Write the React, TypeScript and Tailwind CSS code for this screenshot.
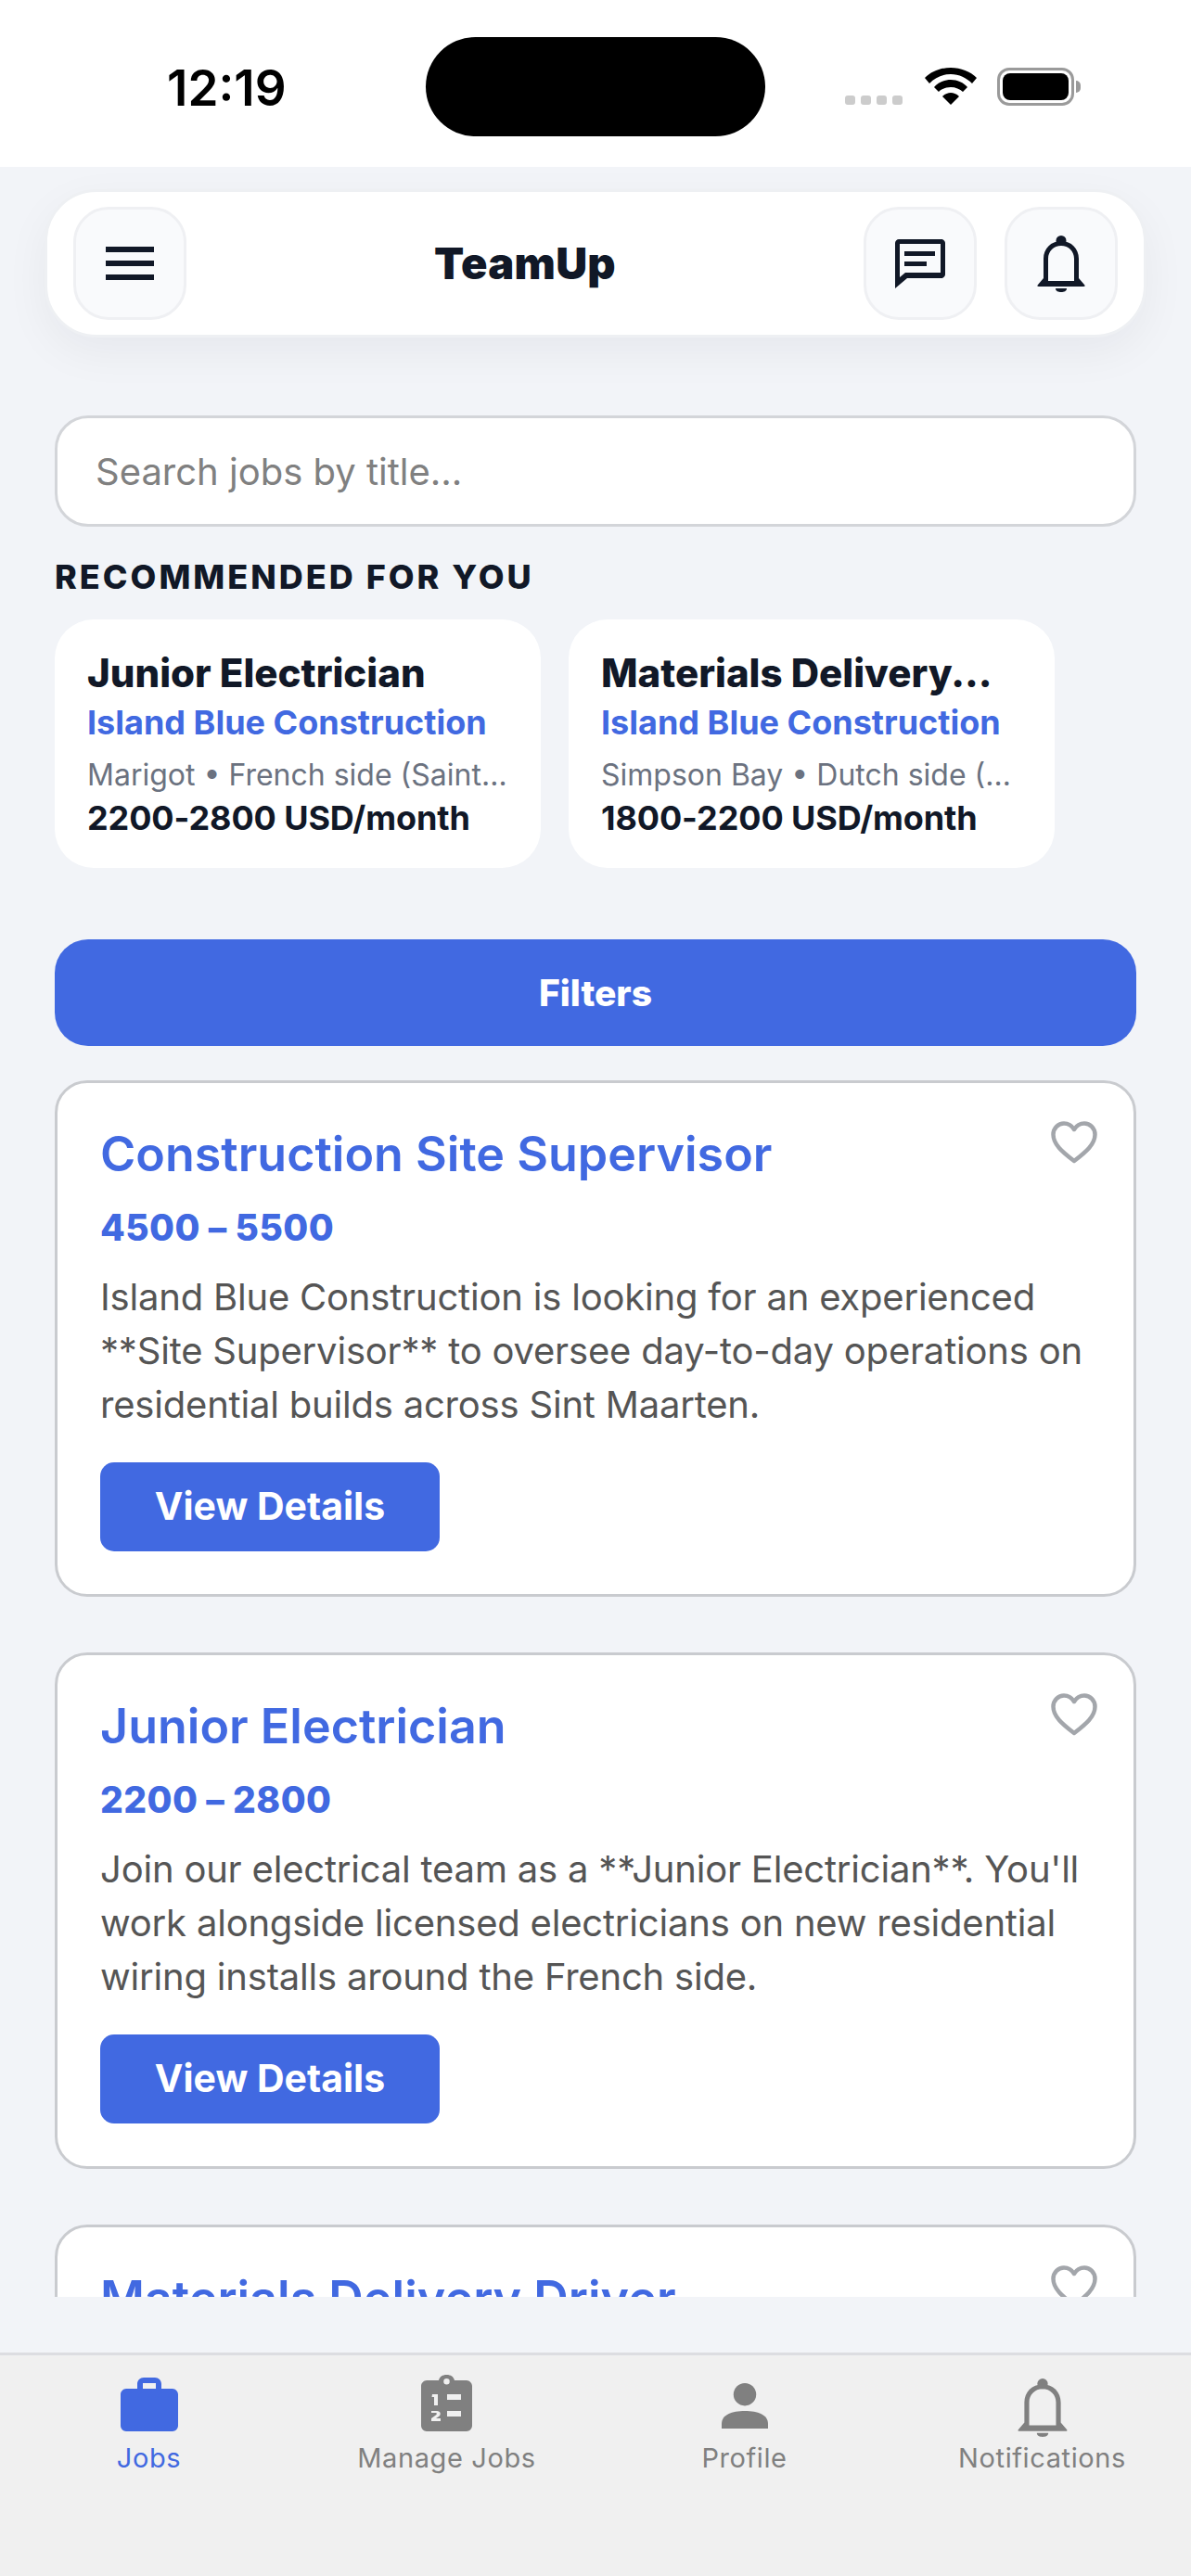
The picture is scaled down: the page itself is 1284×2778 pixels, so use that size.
const RECOMMENDED = [
  {
    title: "Junior Electrician",
    company: "Island Blue Construction",
    location: "Marigot • French side (Saint Martin)",
    pay: "2200-2800 USD/month",
  },
  {
    title: "Materials Delivery...",
    company: "Island Blue Construction",
    location: "Simpson Bay • Dutch side (Sint Maarten)",
    pay: "1800-2200 USD/month",
  },
];

type Job = { title: string; pay?: string; lines?: string[] };

// the last card is only ever seen cut off by the list, so it carries just a title
const JOBS: Job[] = [
  {
    title: "Construction Site Supervisor",
    pay: "4500 – 5500",
    lines: [
      "Island Blue Construction is looking for an experienced",
      "**Site Supervisor** to oversee day-to-day operations on",
      "residential builds across Sint Maarten.",
    ],
  },
  {
    title: "Junior Electrician",
    pay: "2200 – 2800",
    lines: [
      "Join our electrical team as a **Junior Electrician**. You'll",
      "work alongside licensed electricians on new residential",
      "wiring installs around the French side.",
    ],
  },
  { title: "Materials Delivery Driver" },
];

const BellIcon = ({ className }: { className: string }) => (
  <svg viewBox="0 0 52 61" className={className} fill="currentColor">
    <circle cx="26" cy="5.5" r="5.5" />
    <path
      fillRule="evenodd"
      d="M26 6C15 6 7 14 7 25v21l-6 7c-1 1-1 2 1 2h48c2 0 2-1 1-2l-6-7V25C45 14 37 6 26 6Zm0 5c8 0 14 6 14 14v24H12V25c0-8 6-14 14-14Z"
    />
    <path d="M20 57h12c0 3-3 4-6 4s-6-1-6-4Z" />
  </svg>
);

const ChatIcon = () => (
  <svg viewBox="0 0 54 53" className="h-[53px] w-[54px]" fill="currentColor">
    <path
      fillRule="evenodd"
      d="M4 0h46c2 0 4 2 4 4v34c0 2-2 4-4 4H13L0 53V4c0-2 2-4 4-4Zm1 5v36l6-5h38V5H5Z"
    />
    <rect x="10" y="13" width="33" height="5" />
    <rect x="10" y="24" width="24" height="5" />
  </svg>
);

const HeartIcon = () => (
  <svg viewBox="0 0 50 46" className="h-[46px] w-[50px]" fill="none" stroke="#a3a6ab" strokeWidth="4.5" strokeLinejoin="round">
    <path d="M25 43C12 33 2.500 25 2.500 14.500 2.500 7.500 8 2.500 14 2.500c4.500 0 8.500 2.500 11 6.500 2.500-4 6.500-6.500 11-6.500 6 0 11.500 5 11.500 12C47.500 25 38 33 25 43Z" />
  </svg>
);

const BriefcaseIcon = () => (
  <svg viewBox="0 0 62 58" className="h-[58px] w-[62px]" fill="currentColor">
    <path
      fillRule="evenodd"
      d="M6 12h12V7c0-4 3-7 7-7h12c4 0 7 3 7 7v5h12c3 0 6 3 6 6v34c0 3-3 6-6 6H6c-3 0-6-3-6-6V18c0-3 3-6 6-6Zm18-6v6h14V6H24Z"
    />
  </svg>
);

const ClipboardIcon = () => (
  <svg viewBox="0 0 55 61" className="h-[61px] w-[55px]" fill="currentColor">
    <path
      fillRule="evenodd"
      d="M6 6h13c1-4 4-6 8.500-6S35 2 36 6h13c3 0 6 3 6 6v43c0 3-3 6-6 6H6c-3 0-6-3-6-6V12c0-3 3-6 6-6Zm21.500-2a3 3 0 1 0 0 6.500 3 3 0 0 0 0-6.500ZM28 21h15v6H28v-6Zm0 18h15v6H28v-6ZM14 21h-2l-.500 3H14v9h4V21h-4Zm-3 18v2h5c1 0 1 1 .500 2l-5.500 4v3h10v-3h-5l3-2c3-2 2-6-2-6h-6Z"
    />
  </svg>
);

const PersonIcon = () => (
  <svg viewBox="0 0 50 49" className="h-[49px] w-[50px]" fill="currentColor">
    <circle cx="25" cy="12.200" r="12.200" />
    <path d="M0 44c0-10 11-14 25-14s25 4 25 14v5H0v-5Z" />
  </svg>
);

const StatusBar = () => (
  <div className="relative h-[180px] shrink-0 bg-white">
    <span className="absolute left-[180px] top-[63px] text-[53px] leading-[64px] font-semibold text-black">
      12:19
    </span>
    <div className="absolute left-[459px] top-[40px] h-[107px] w-[366px] rounded-full bg-black" />
    <div className="absolute left-[911px] top-[103px] flex gap-[6px]">
      <span className="h-[10px] w-[11px] rounded-[3px] bg-[#cccccc]" />
      <span className="h-[10px] w-[11px] rounded-[3px] bg-[#cccccc]" />
      <span className="h-[10px] w-[11px] rounded-[3px] bg-[#cccccc]" />
      <span className="h-[10px] w-[11px] rounded-[3px] bg-[#cccccc]" />
    </div>
    <svg viewBox="0 0 56 40" className="absolute left-[997px] top-[73px] h-[40px] w-[56px]" fill="currentColor">
      <path d="M28 0c11 0 21 4 28 11l-5 6C45 11 37 7 28 7S11 11 5 17l-5-6C7 4 17 0 28 0Z" />
      <path d="M28 13c7 0 14 3 18 8l-5 5c-3-3-8-5-13-5s-10 2-13 5l-5-5c4-5 11-8 18-8Z" />
      <path d="M28 27c3 0 6 1 9 4l-9 9-9-9c3-3 6-4 9-4Z" />
    </svg>
    <div className="absolute left-[1075px] top-[73px] h-[41px] w-[83px] rounded-[13px] border-[3px] border-[#9a9a9a] p-[3px]">
      <div className="h-full w-full rounded-[8px] bg-black" />
    </div>
    <div className="absolute left-[1160px] top-[87px] h-[13px] w-[5px] rounded-r-full bg-[#9a9a9a]" />
  </div>
);

const IconButton = ({ children }: { children: React.ReactNode }) => (
  <button className="flex h-[122px] w-[122px] items-center justify-center rounded-[38px] border-[3px] border-[#eff0f3] bg-[#f9fafc] text-[#111827]">
    {children}
  </button>
);

const Header = () => (
  <div className="relative z-10 mx-[48px] mt-[24px] flex h-[160px] items-center rounded-[56px] border-[3px] border-[#eef0f3] bg-white px-[28px] shadow-[0_16px_48px_rgba(17,24,39,0.05)]">
    <IconButton>
      <span className="flex w-[52px] flex-col gap-[8.500px]">
        <span className="h-[6.500px] bg-[#111827]" />
        <span className="h-[6.500px] bg-[#111827]" />
        <span className="h-[6.500px] bg-[#111827]" />
      </span>
    </IconButton>
    <h1 className="flex-1 text-center text-[47px] leading-[56px] font-black tracking-[0.300px] text-[#111827]">
      TeamUp
    </h1>
    <div className="flex gap-[30px]">
      <IconButton>
        <ChatIcon />
      </IconButton>
      <IconButton>
        <BellIcon className="h-[61px] w-[52px]" />
      </IconButton>
    </div>
  </div>
);

const RecommendedCard = ({ job }: { job: (typeof RECOMMENDED)[number] }) => (
  <div className="h-[268px] w-[524px] shrink-0 rounded-[42px] bg-white px-[35px] pt-[30px]">
    <p className="truncate text-[42px] leading-[56px] font-extrabold text-[#111827]">{job.title}</p>
    <p className="mt-[3px] truncate text-[36px] leading-[44px] font-bold text-[#4169e1]">{job.company}</p>
    <p className="mt-[13px] truncate text-[32px] leading-[44px] text-[#6b7280]">{job.location}</p>
    <p className="truncate text-[36px] leading-[48px] font-bold tracking-[-0.100px] text-[#111827]">{job.pay}</p>
  </div>
);

const JobCard = ({ job }: { job: Job }) => (
  <div className="relative h-[557px] shrink-0 rounded-[35px] border-[3px] border-[#c9cbcf] bg-white px-[46px] pt-[42px]">
    <div className="absolute right-[39px] top-[41px]">
      <HeartIcon />
    </div>
    <h2 className="text-[52px] leading-[70px] font-semibold text-[#4169e1]">{job.title}</h2>
    {job.pay && (
      <p className="mt-[17px] text-[39px] leading-[54px] font-extrabold tracking-[0.400px] text-[#4169e1]">{job.pay}</p>
    )}
    {job.lines && (
      <>
        <div className="mt-[19px] text-[40px] leading-[58px] tracking-[-0.200px] text-[#555555]">
          {job.lines.map((line) => (
            <p key={line} className="whitespace-nowrap">
              {line}
            </p>
          ))}
        </div>
        <button className="mt-[33px] flex h-[96px] w-[366px] items-center justify-center rounded-[15px] bg-[#4169e1] text-[41px] font-bold text-white">
          View Details
        </button>
      </>
    )}
  </div>
);

const TABS = [
  { label: "Jobs", icon: <BriefcaseIcon />, active: true, top: "pt-[24px]" },
  { label: "Manage Jobs", icon: <ClipboardIcon />, active: false, top: "pt-[21px]" },
  { label: "Profile", icon: <PersonIcon />, active: false, top: "pt-[30px]" },
  { label: "Notifications", icon: <BellIcon className="h-[63px] w-[56px]" />, active: false, top: "pt-[25px]" },
];

const TabBar = () => (
  <nav className="grid h-[241px] shrink-0 grid-cols-4 border-t-[3px] border-[#dcdde1] bg-[#f0f0f0]">
    {TABS.map((tab) => (
      <div
        key={tab.label}
        className={`flex flex-col items-center ${tab.active ? "text-[#4169e1]" : "text-[#808080]"}`}
      >
        <div className={`flex h-[91px] items-start ${tab.top}`}>{tab.icon}</div>
        <span className="text-[29px] leading-[40px] tracking-[0.600px]">{tab.label}</span>
      </div>
    ))}
  </nav>
);

export default function App() {
  return (
    <div className="flex h-[2778px] w-[1284px] flex-col overflow-hidden bg-[#f2f4f8] font-['Inter',sans-serif]">
      <StatusBar />
      <main className="flex min-h-0 flex-1 flex-col">
        <Header />
        <div className="mx-[59px] mt-[84px] flex h-[120px] items-center rounded-[36px] border-[3px] border-[#d3d5d9] bg-white px-[41px] pt-[2px] text-[40px] text-[#808080]">
          Search jobs by title...
        </div>
        <h3 className="mx-[59px] mt-[32px] text-[36px] leading-[44px] font-extrabold tracking-[3px] text-[#111827]">
          RECOMMENDED FOR YOU
        </h3>
        <div className="mx-[59px] mt-[24px] flex gap-[30px]">
          {RECOMMENDED.map((job) => (
            <RecommendedCard key={job.title} job={job} />
          ))}
        </div>
        <button className="mx-[59px] mt-[77px] flex h-[115px] items-center justify-center rounded-[36px] bg-[#4169e1] pt-[2px] text-[39px] font-extrabold text-white">
          Filters
        </button>
        <div className="mt-[37px] flex h-[1312px] flex-col gap-[60px] overflow-hidden px-[59px]">
          {JOBS.map((job) => (
            <JobCard key={job.title} job={job} />
          ))}
        </div>
      </main>
      <TabBar />
    </div>
  );
}
